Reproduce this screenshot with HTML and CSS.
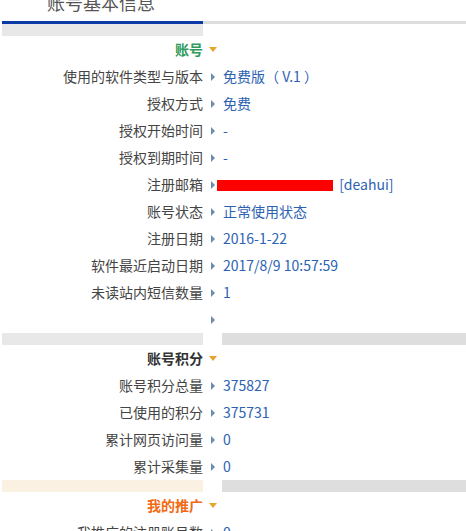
FILE: index.html
```html
<!DOCTYPE html>
<html lang="zh-CN">
<head>
    <meta charset="UTF-8">
    <title>账号基本信息</title>
    <link rel="stylesheet" href="styles.css">
</head>
<body>
    <div class="page">
        <h2 class="title">账号基本信息</h2>
        <div class="tabbar">
            <div class="tab-active"></div>
            <div class="tab-rest"></div>
        </div>
        <div class="band">
            <div class="band-left"></div>
        </div>

        <div class="info">
            <div class="head head-green">账号</div><div class="caret"></div><div></div>
            <div class="label">使用的软件类型与版本</div><div class="arrow"></div><div class="value">免费版（ V.1 ）</div>
            <div class="label">授权方式</div><div class="arrow"></div><div class="value">免费</div>
            <div class="label">授权开始时间</div><div class="arrow"></div><div class="value">-</div>
            <div class="label">授权到期时间</div><div class="arrow"></div><div class="value">-</div>
            <div class="label">注册邮箱</div><div class="arrow"></div><div class="value"><span class="hidden-mail"></span> [deahui]</div>
            <div class="label">账号状态</div><div class="arrow"></div><div class="value">正常使用状态</div>
            <div class="label">注册日期</div><div class="arrow"></div><div class="value">2016-1-22</div>
            <div class="label">软件最近启动日期</div><div class="arrow"></div><div class="value">2017/8/9 10:57:59</div>
            <div class="label">未读站内短信数量</div><div class="arrow"></div><div class="value">1</div>
            <div class="label"></div><div class="arrow"></div><div class="value"></div>
        </div>

        <div class="band">
            <div class="band-left"></div>
            <div class="band-right"></div>
        </div>

        <div class="info">
            <div class="head">账号积分</div><div class="caret"></div><div></div>
            <div class="label">账号积分总量</div><div class="arrow"></div><div class="value">375827</div>
            <div class="label">已使用的积分</div><div class="arrow"></div><div class="value">375731</div>
            <div class="label">累计网页访问量</div><div class="arrow"></div><div class="value">0</div>
            <div class="label">累计采集量</div><div class="arrow"></div><div class="value">0</div>
        </div>

        <div class="band">
            <div class="band-left band-warm"></div>
            <div class="band-right"></div>
        </div>

        <div class="info">
            <div class="head head-orange">我的推广</div><div class="caret"></div><div></div>
            <div class="label">我推广的注册账号数</div><div class="arrow"></div><div class="value">0</div>
        </div>
    </div>
</body>
</html>
```
FILE: styles.css
```css
body {
    margin: 0;
    background-color: #fff;
    font-family: "Microsoft YaHei", "Noto Sans CJK SC", sans-serif;
    font-size: 14px;
    color: #444;
}
.page {
    overflow: hidden;
    height: 531px;
}
.title {
    margin: -11px 0 0 0;
    padding-left: 47px;
    height: 32px;
    line-height: 26px;
    font-size: 18px;
    font-weight: normal;
    color: #555;
}
.tabbar {
    display: flex;
    height: 3px;
}
.tab-active {
    width: 201px;
    margin-left: 2px;
    background-color: #0b3aa6;
}
.tab-rest {
    flex: 1;
    background-color: #ddd;
}
.band {
    display: flex;
    height: 12px;
}
.band-left {
    width: 201px;
    margin-left: 2px;
    background-color: #e8e8e8;
}
.band-warm {
    background-color: #fbf1e2;
}
.band-right {
    flex: 1;
    margin-left: 19px;
    background-color: #dedede;
}
.info {
    display: grid;
    grid-template-columns: 203px 19px 1fr;
    grid-auto-rows: 27px;
    align-items: center;
}
.label,
.head,
.value {
    padding-bottom: 2px;
}
.label,
.head {
    text-align: right;
    white-space: nowrap;
}
.head {
    font-weight: bold;
    color: #333;
}
.head-green {
    color: #2f9a5c;
}
.head-orange {
    color: #f26a13;
}
.arrow {
    justify-self: center;
    width: 0;
    height: 0;
    margin-left: 1px;
    border-top: 4px solid transparent;
    border-bottom: 4px solid transparent;
    border-left: 4px solid #6a8cb0;
}
.caret {
    justify-self: center;
    width: 0;
    height: 0;
    margin-left: 1px;
    border-left: 4px solid transparent;
    border-right: 4px solid transparent;
    border-top: 5px solid #e8a32a;
}
.value {
    padding-left: 1px;
    color: #2b62b3;
    white-space: nowrap;
}
.hidden-mail {
    display: inline-block;
    width: 116px;
    height: 11px;
    margin-left: -6px;
    margin-right: 3px;
    vertical-align: -1px;
    background-color: #ff0000;
}
```
